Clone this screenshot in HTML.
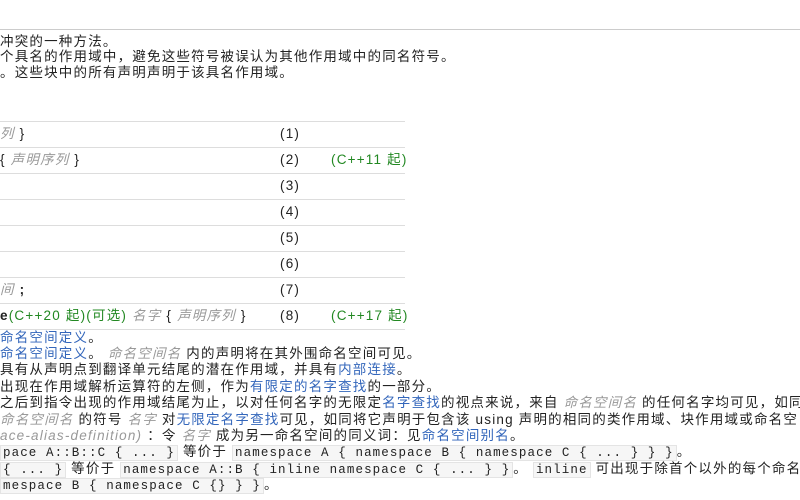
<!DOCTYPE html>
<html><head><meta charset="utf-8"><style>
body{margin:0;width:800px;height:500px;overflow:hidden;background:#fff;font-family:"Liberation Sans","Noto Sans CJK SC",sans-serif;font-size:13.5px;letter-spacing:1.2px;color:#222;position:relative}
.a{position:absolute;white-space:nowrap;line-height:16px}
.hr{position:absolute;left:0;height:1px;background:#ddd}
.i{color:#999;font-style:italic}
.l{color:#3366bb}
.g{color:#228822}
.c{font-family:"Liberation Mono","Noto Sans CJK SC",monospace;font-size:12.5px;letter-spacing:1.1px;background:#f6f6f6;border:1px solid #e4e4e4;padding:0 2px}
</style></head><body>
<div class="hr" style="top:29px;width:800px;background:#ccc"></div>
<div class="a" style="top:34px;left:0">冲突的一种方法。</div>
<div class="a" style="top:49px;left:0">个具名的作用域中，避免这些符号被误认为其他作用域中的同名符号。</div>
<div class="a" style="top:65px;left:0">。这些块中的所有声明声明于该具名作用域。</div>
<div class="hr" style="top:121px;width:405px"></div>
<div class="hr" style="top:147px;width:405px"></div>
<div class="hr" style="top:173px;width:405px"></div>
<div class="hr" style="top:199px;width:405px"></div>
<div class="hr" style="top:225px;width:405px"></div>
<div class="hr" style="top:251px;width:405px"></div>
<div class="hr" style="top:277px;width:405px"></div>
<div class="hr" style="top:303px;width:405px"></div>
<div class="hr" style="top:329px;width:405px"></div>
<div class="a" style="top:126px;left:0"><span class="i">列</span> }</div>
<div class="a" style="top:152px;left:0">{ <span class="i">声明序列</span> }</div>
<div class="a" style="top:282px;left:0"><span class="i">间</span> <b>;</b></div>
<div class="a" style="top:308px;left:0"><b>e</b><span class="g">(C++20 起)(可选)</span> <span class="i">名字</span> { <span class="i">声明序列</span> }</div>
<div class="a" style="top:126px;left:280px">(1)</div>
<div class="a" style="top:152px;left:280px">(2)</div>
<div class="a" style="top:178px;left:280px">(3)</div>
<div class="a" style="top:204px;left:280px">(4)</div>
<div class="a" style="top:230px;left:280px">(5)</div>
<div class="a" style="top:256px;left:280px">(6)</div>
<div class="a" style="top:282px;left:280px">(7)</div>
<div class="a" style="top:308px;left:280px">(8)</div>
<div class="a g" style="top:152px;left:331px">(C++11 起)</div>
<div class="a g" style="top:308px;left:331px">(C++17 起)</div>
<div class="a" style="top:330px;left:0"><span class="l">命名空间定义</span>。</div>
<div class="a" style="top:346px;left:0"><span class="l">命名空间定义</span>。 <span class="i">命名空间名</span> 内的声明将在其外围命名空间可见。</div>
<div class="a" style="top:362px;left:0">具有从声明点到翻译单元结尾的潜在作用域，并具有<span class="l">内部连接</span>。</div>
<div class="a" style="top:379px;left:0">出现在作用域解析运算符的左侧，作为<span class="l">有限定的名字查找</span>的一部分。</div>
<div class="a" style="top:395px;left:0">之后到指令出现的作用域结尾为止，以对任何名字的无限定<span class="l">名字查找</span>的视点来说，来自 <span class="i">命名空间名</span> 的任何名字均可见，如同它</div>
<div class="a" style="top:412px;left:0"> <span class="i">命名空间名</span> 的符号 <span class="i">名字</span> 对<span class="l">无限定名字查找</span>可见，如同将它声明于包含该 using 声明的相同的类作用域、块作用域或命名空</div>
<div class="a" style="top:428px;left:0"><span class="i">ace-alias-definition)</span> ：令 <span class="i">名字</span> 成为另一命名空间的同义词：见<span class="l">命名空间别名</span>。</div>
<div class="a" style="top:444px;left:0"><span class="c">pace A::B::C { ... }</span> 等价于 <span class="c">namespace A { namespace B { namespace C { ... } } }</span>。</div>
<div class="a" style="top:461px;left:0"><span class="c">{ ... }</span> 等价于 <span class="c">namespace A::B { inline namespace C { ... } }</span>。 <span class="c">inline</span> 可出现于除首个以外的每个命名空间名</div>
<div class="a" style="top:477px;left:0"><span class="c">mespace B { namespace C {} } }</span>。</div>
</body></html>
